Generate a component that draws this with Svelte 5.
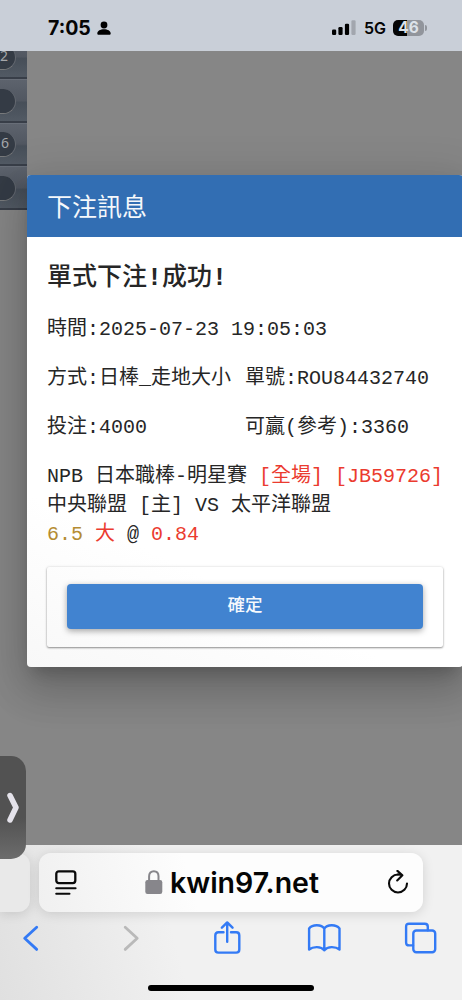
<script lang="ts">
	const rail: string[] = ['2', '', '6', ''];

	const rows = [
		['方式:日棒_走地大小', '單號:ROU84432740'],
		['投注:4000', '可贏(參考):3360']
	];
</script>

<div class="phone">
	<header class="status">
		<div class="clock">
			<span>7:05</span>
			<svg width="14" height="15" viewBox="0 0 14 15">
				<circle cx="7" cy="4" r="3.4" />
				<path d="M.3 12.400C.3 9.800 3.400 8.200 7 8.200s6.700 1.600 6.700 4.200c0 .8-.5 1.400-1.400 1.400H1.700c-.9 0-1.400-.6-1.400-1.400Z" />
			</svg>
		</div>
		<div class="signals">
			<svg width="24" height="16" viewBox="0 0 24 16">
				<rect x="0" y="9.500" width="4.200" height="5.500" rx="1.200" />
				<rect x="6.400" y="7" width="4.200" height="8" rx="1.200" />
				<rect x="12.900" y="3.700" width="4.200" height="11.300" rx="1.200" />
				<rect class="weak" x="19.400" y=".3" width="4.200" height="14.700" rx="1.200" />
			</svg>
			<span class="network">5G</span>
			<div class="battery">46</div>
			<i class="tip"></i>
		</div>
	</header>

	<main>
		<nav class="rail">
			{#each rail as count}
				<div class="rail-row"><span class="pill">{count}</span></div>
			{/each}
		</nav>

		<section class="dialog">
			<h1>下注訊息</h1>
			<div class="content">
				<h2>單式下注<b>!</b>成功<b>!</b></h2>
				<p>時間:2025-07-23 19:05:03</p>
				{#each rows as row}
					<div class="pair">
						{#each row as cell}
							<span>{cell}</span>
						{/each}
					</div>
				{/each}
				<p>
					NPB 日本職棒-明星賽 <span class="red">[全場] [JB59726]</span><br />
					中央聯盟 [主] VS 太平洋聯盟<br />
					<span class="gold">6.5</span> <span class="red">大</span> @ <span class="red">0.84</span>
				</p>
				<div class="actions">
					<button>確定</button>
				</div>
			</div>
		</section>
	</main>

	<footer>
		<div class="tabs">
			<div class="previous-tab"></div>
			<div class="address">
				<svg width="22" height="26" viewBox="0 0 22 26" class="line">
					<rect x="1.300" y="1.300" width="19" height="11.800" rx="2.500" stroke-width="2.300" />
					<path d="M1.200 18.200H20.600M1.200 23.700H14.500" stroke-width="2" />
				</svg>
				<div class="host">
					<svg width="18" height="25" viewBox="0 0 18 25">
						<path d="M4.100 11V6.300C4.100 3 6 1.300 8.800 1.300S13.500 3 13.500 6.300V11" fill="none" stroke="#87868b" stroke-width="2" />
						<rect x=".3" y="10" width="17" height="14" rx="2.200" fill="#87868b" />
					</svg>
					<span>kwin97.net</span>
				</div>
				<svg width="22" height="26" viewBox="0 0 22 26" class="line">
					<path d="M11 4.500A9 9 0 1 0 20 13.500" stroke-width="2.100" />
					<path d="M10.400 .9 15.400 5.200 10.200 10.400M15.200 5.200C13.800 4.600 12.400 4.500 11 4.500" stroke-width="2.100" />
				</svg>
			</div>
		</div>
		<div class="toolbar">
			<svg viewBox="0 0 34 34"><path d="M22.700 6.200 10.700 17.300 22.700 28.400" stroke-width="2.800" /></svg>
			<svg viewBox="0 0 34 34" class="disabled"><path d="M13.200 6.200 25.200 17.300 13.200 28.400" stroke-width="2.800" /></svg>
			<svg viewBox="0 0 34 34">
				<path d="M14.500 11.300H9.400Q6.300 11.300 6.300 14.400V28.500Q6.300 31.600 9.400 31.600H27.200Q30.300 31.600 30.300 28.500V14.400Q30.300 11.300 27.200 11.300H22" />
				<path d="M18.200 20.700V1.500M12.900 6.700 18.200 1.400 23.500 6.700" />
			</svg>
			<svg viewBox="0 0 34 34">
				<path d="M17.300 29.200V7.600C14.500 3.200 5.500 3.100 2.100 7.400V28.500C6 25.400 14 25.100 17.300 29.200 20.600 25.100 28.600 25.400 32.500 28.500V7.400C29.100 3.100 20.100 3.200 17.300 7.600" />
			</svg>
			<svg viewBox="0 0 34 34">
				<path d="M9 24.400H5.100Q2.100 24.400 2.100 21.400V5.700Q2.100 2.700 5.100 2.700H20.800Q23.800 2.700 23.800 5.700V9.200" />
				<rect x="9.300" y="9.500" width="21.900" height="21.700" rx="3" />
			</svg>
		</div>
		<div class="home"></div>
	</footer>

	<div class="drawer">
		<svg width="14" height="34" viewBox="0 0 14 34"><path d="M3 4.500 9 16.500 3 29" /></svg>
	</div>
</div>

<style>
	:global(body) {
		margin: 0;
	}
	.phone {
		position: relative;
		display: flex;
		flex-direction: column;
		width: 462px;
		height: 1000px;
		overflow: hidden;
		background-color: #868686;
		font-family: Inter, sans-serif;
	}
	.status {
		display: flex;
		justify-content: space-between;
		flex: none;
		box-sizing: border-box;
		height: 51px;
		padding: 5px 35px 0 48px;
		background-color: #c9cfd8;
		color: #050505;
		font-weight: 700;
	}
	.clock,
	.signals {
		display: flex;
		align-items: center;
	}
	.clock {
		gap: 6px;
		font-size: 19.500px;
	}
	.weak {
		fill: #a2a6ae;
	}
	.network {
		margin: 0 7px 0 8px;
		font-size: 16px;
		font-weight: 600;
	}
	.battery {
		width: 31px;
		height: 16px;
		border-radius: 5px;
		background: linear-gradient(90deg, #050505 46%, #91959c 46%);
		color: #dce2e9;
		font-size: 15.500px;
		line-height: 16px;
		text-align: center;
	}
	.tip {
		width: 2px;
		height: 6px;
		margin-left: 1px;
		border-radius: 0 3px 3px 0;
		background-color: #91959c;
	}
	main {
		display: flex;
		align-items: flex-start;
		flex: none;
		height: 794px;
		overflow: hidden;
		background-color: #868686;
	}
	.rail {
		flex: none;
		width: 27px;
		margin-top: -16px;
	}
	.rail-row {
		display: flex;
		align-items: center;
		box-sizing: border-box;
		height: 43.800px;
		border-top: 1px solid #686e78;
		border-bottom: 2px solid #383e48;
		background: linear-gradient(#5d636d, #515761 50%, #464e58 55%, #525a64);
	}
	.pill {
		box-sizing: border-box;
		width: 16px;
		height: 25px;
		margin-top: 2px;
		padding-right: 6px;
		border-bottom: 1px solid #77797b;
		border-right: 1px solid #636870;
		border-radius: 0 13px 13px 0;
		background-color: #343b45;
		color: #a5a7aa;
		font: 14px/22px 'Noto Sans', sans-serif;
		text-align: right;
	}
	.rail-row:first-child .pill {
		padding-right: 10px;
	}
	.dialog {
		position: relative;
		flex: none;
		width: 436px;
		height: 492px;
		margin-top: 124px;
		border-radius: 4px;
		background: linear-gradient(25deg, #f8f8f8, #fff 25%);
		box-shadow:
			0 11px 15px -7px rgba(0, 0, 0, 0.2),
			0 24px 38px 3px rgba(0, 0, 0, 0.14),
			0 9px 46px 8px rgba(0, 0, 0, 0.12);
		color: #262626;
		font-family: 'Liberation Mono', 'Noto Sans CJK TC', monospace;
	}
	h1 {
		box-sizing: border-box;
		height: 62px;
		margin: 0;
		padding: 4px 0 0 20px;
		border-radius: 4px 4px 0 0;
		background-color: #326eb3;
		color: #f5f8fb;
		font-size: 25px;
		font-weight: 400;
		line-height: 62px;
	}
	.content {
		padding: 21px 20px 20px;
		font-size: 20px;
		line-height: 29px;
	}
	h2 {
		margin: 0 0 19px;
		padding-top: 3px;
		font-size: 25px;
		font-weight: 500;
		line-height: 35px;
	}
	p {
		margin: 0 0 20px;
		white-space: nowrap;
	}
	.pair {
		display: grid;
		grid-template-columns: 1fr 1fr;
		margin-bottom: 20px;
		white-space: nowrap;
	}
	.red {
		color: #eb3b2f;
	}
	.gold {
		color: #b58c32;
	}
	.actions {
		box-sizing: border-box;
		height: 80px;
		margin-top: -2px;
		padding: 17px 20px;
		border-radius: 2px;
		box-shadow:
			0 1px 2px rgba(0, 0, 0, 0.4),
			0 0 3px rgba(0, 0, 0, 0.12);
	}
	button {
		display: block;
		width: 100%;
		height: 45px;
		padding: 0 0 7px;
		border: 0;
		border-radius: 4px;
		background-color: #4183d0;
		box-shadow: 0 2px 6px rgba(0, 0, 0, 0.35);
		color: #f6f9fd;
		font: 500 17.500px 'Noto Sans CJK TC', sans-serif;
	}
	footer {
		display: flex;
		flex-direction: column;
		flex: 1;
		background: linear-gradient(75deg, #e0e0e0, #f1f1f1 38%);
	}
	.tabs {
		display: flex;
		gap: 9px;
		padding-top: 8px;
	}
	.previous-tab {
		width: 30px;
		height: 59px;
		border-radius: 0 12px 12px 0;
		background-color: #e9e9e9;
		box-shadow: 0 2px 12px rgba(0, 0, 0, 0.13);
	}
	.address {
		display: flex;
		align-items: center;
		justify-content: space-between;
		box-sizing: border-box;
		width: 384px;
		height: 59px;
		padding: 0 14px 0 16px;
		border-radius: 12px;
		background: linear-gradient(75deg, #f0f0f0, #fdfdfd 40%);
		box-shadow: 0 2px 12px rgba(0, 0, 0, 0.13);
	}
	.line {
		fill: none;
		stroke: #0a0a0a;
		stroke-linecap: round;
		stroke-linejoin: round;
	}
	.host {
		display: flex;
		align-items: center;
		gap: 7px;
		color: #050505;
		font-size: 28.500px;
		font-weight: 600;
	}
	.toolbar {
		display: flex;
		justify-content: space-between;
		padding: 9px 24px 0 14px;
	}
	.toolbar svg {
		width: 34px;
		height: 34px;
		fill: none;
		stroke: #337af5;
		stroke-width: 2.400;
		stroke-linecap: round;
		stroke-linejoin: round;
	}
	.toolbar .disabled {
		stroke: #b9b9b9;
	}
	.home {
		width: 166px;
		height: 6px;
		margin: 30px auto 0;
		border-radius: 3px;
		background-color: #000;
	}
	/* slide-over handle floating above the page and the browser bar */
	.drawer {
		position: absolute;
		top: 756px;
		left: 0;
		display: flex;
		align-items: center;
		box-sizing: border-box;
		width: 26px;
		height: 103px;
		padding-left: 7px;
		border-radius: 0 15px 15px 0;
		background: linear-gradient(#525252 60%, #6c6c6c);
	}
	.drawer path {
		fill: none;
		stroke: #e4e2ea;
		stroke-width: 5.500;
		stroke-linecap: round;
		stroke-linejoin: round;
	}
</style>
